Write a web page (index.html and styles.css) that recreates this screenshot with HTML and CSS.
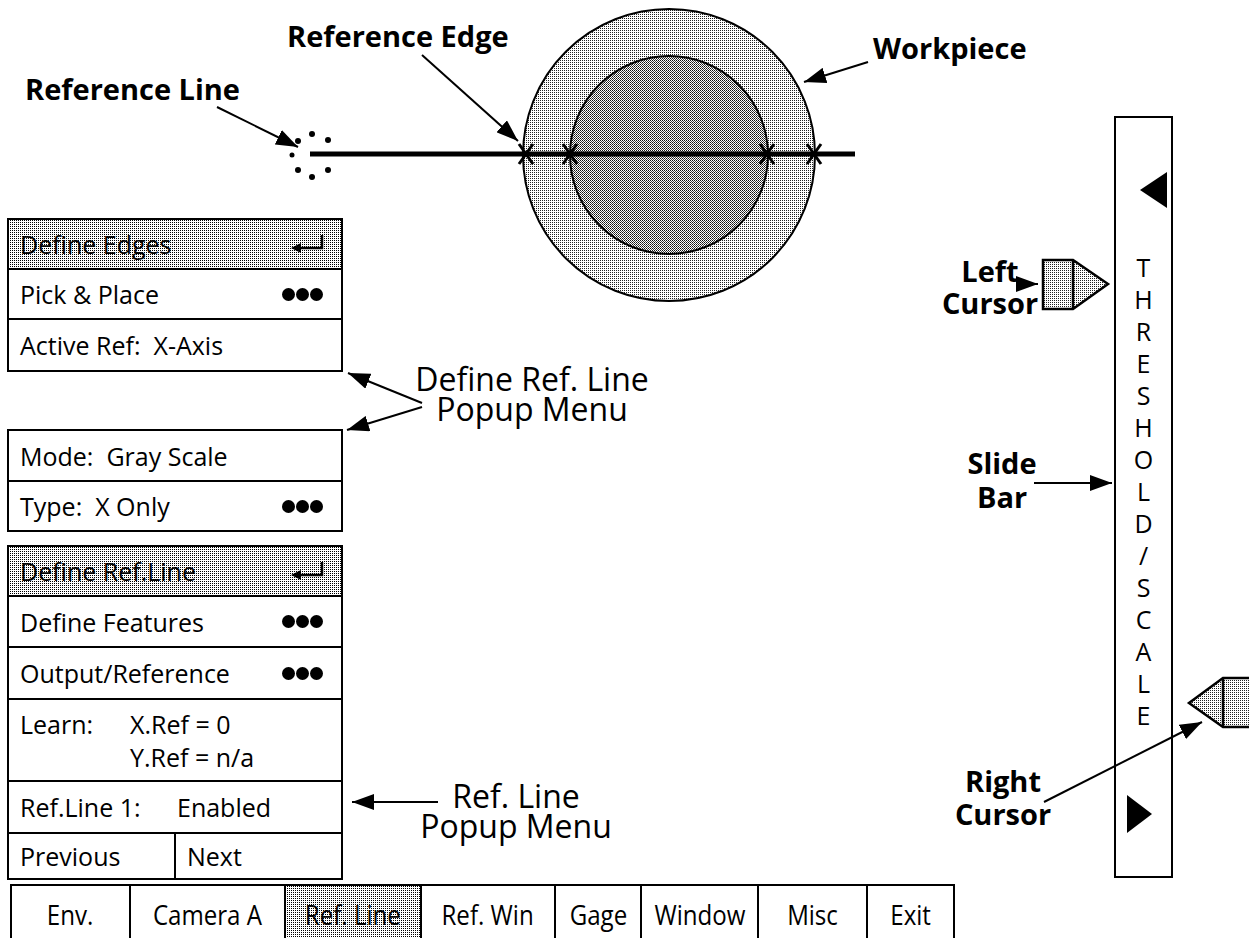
FILE: index.html
```html
<html>
<head>
    <link rel="stylesheet" href="styles.css">
</head>
<body>
<div class="page">

  <div class="side">
    <div class="menu edges">
      <div class="row head"><span>Define Edges</span><svg class="ret" viewBox="0 0 34 22"><path d="M31 2 V15 H7" /><polygon points="0,15 10,10 10,20" /></svg></div>
      <div class="row"><span>Pick &amp; Place</span><span class="more"><i></i><i></i><i></i></span></div>
      <div class="row">Active Ref:  X-Axis</div>
    </div>

    <div class="menu mode">
      <div class="row">Mode:  Gray Scale</div>
      <div class="row"><span>Type:  X Only</span><span class="more"><i></i><i></i><i></i></span></div>
    </div>

    <div class="menu refline">
      <div class="row head"><span>Define Ref.Line</span><svg class="ret" viewBox="0 0 34 22"><path d="M31 2 V15 H7" /><polygon points="0,15 10,10 10,20" /></svg></div>
      <div class="row"><span>Define Features</span><span class="more"><i></i><i></i><i></i></span></div>
      <div class="row"><span>Output/Reference</span><span class="more"><i></i><i></i><i></i></span></div>
      <div class="row learn"><span class="key">Learn:</span><span class="vals">X.Ref = 0<br>Y.Ref = n/a</span></div>
      <div class="row"><span class="key wide">Ref.Line 1:</span><span class="grow">Enabled</span></div>
      <div class="row split"><span class="cell">Previous</span><span class="cell">Next</span></div>
    </div>
  </div>

  <div class="tabs">
    <div class="tab"><span>Env.</span></div>
    <div class="tab"><span>Camera A</span></div>
    <div class="tab on"><span>Ref. Line</span></div>
    <div class="tab"><span>Ref. Win</span></div>
    <div class="tab"><span>Gage</span></div>
    <div class="tab"><span>Window</span></div>
    <div class="tab"><span>Misc</span></div>
    <div class="tab"><span>Exit</span></div>
  </div>

  <svg class="sketch" width="1249" height="938" viewBox="0 0 1249 938">
    <defs>
      <pattern id="light" width="2" height="2" patternUnits="userSpaceOnUse">
        <rect width="2" height="2" fill="#fff"/><rect width="1" height="1" fill="#222"/>
      </pattern>
      <pattern id="dark" width="2" height="2" patternUnits="userSpaceOnUse">
        <rect width="2" height="2" fill="#fff"/><rect width="1" height="1" fill="#111"/><rect x="1" y="1" width="1" height="1" fill="#444"/>
      </pattern>
      <marker id="head" markerWidth="22" markerHeight="16" refX="22" refY="8" orient="auto" markerUnits="userSpaceOnUse">
        <path d="M0 0 L22 8 L0 16 z"/>
      </marker>
    </defs>

    <!-- workpiece -->
    <circle cx="669" cy="155" r="146" fill="url(#light)" stroke="#000" stroke-width="2"/>
    <circle cx="669" cy="155" r="99" fill="url(#dark)" stroke="#000" stroke-width="2"/>
    <line x1="310" y1="154" x2="855" y2="154" stroke="#000" stroke-width="5"/>
    <g stroke="#000" stroke-width="3">
      <path d="M519 144 L533 164 M533 144 L519 164"/>
      <path d="M563 144 L577 164 M577 144 L563 164"/>
      <path d="M760 144 L774 164 M774 144 L760 164"/>
      <path d="M807 144 L821 164 M821 144 L807 164"/>
    </g>
    <g fill="#000">
      <circle cx="298" cy="141" r="3"/><circle cx="312" cy="134" r="3"/><circle cx="328" cy="140" r="3"/>
      <circle cx="292" cy="155" r="2.5"/><circle cx="298" cy="170" r="3"/><circle cx="312" cy="177" r="3"/>
      <circle cx="328" cy="170" r="3"/>
    </g>

    <!-- arrows -->
    <g stroke="#000" stroke-width="2" marker-end="url(#head)">
      <line x1="217" y1="107" x2="298" y2="147"/>
      <line x1="422" y1="55" x2="518" y2="141"/>
      <line x1="868" y1="62" x2="804" y2="82"/>
      <line x1="422" y1="403" x2="348" y2="373"/>
      <line x1="422" y1="407" x2="347" y2="430"/>
      <line x1="438" y1="802" x2="352" y2="802"/>
      <line x1="1019" y1="284" x2="1038" y2="284"/>
      <line x1="1034" y1="483" x2="1112" y2="483"/>
      <line x1="1044" y1="802" x2="1202" y2="722"/>
    </g>

    <!-- cursors -->
    <g stroke="#000" stroke-width="2.5" fill="url(#light)">
      <polygon points="1043,260 1073,260 1108,284 1073,309 1043,309"/>
      <line x1="1073" y1="260" x2="1073" y2="309"/>
      <polygon points="1260,678 1223,678 1189,703 1223,727 1260,727"/>
      <line x1="1223" y1="678" x2="1223" y2="727"/>
    </g>
  </svg>

  <div class="note ref-edge">Reference Edge</div>
  <div class="note ref-line">Reference Line</div>
  <div class="note workpiece">Workpiece</div>
  <div class="note left-cur">Left<br>Cursor</div>
  <div class="note slide">Slide<br>Bar</div>
  <div class="note right-cur">Right<br>Cursor</div>
  <div class="note plain define-pop">Define Ref. Line<br>Popup Menu</div>
  <div class="note plain line-pop">Ref. Line<br>Popup Menu</div>

  <div class="slider">
    <i class="tri-up"></i>
    <div class="word">
      <span>T</span><span>H</span><span>R</span><span>E</span><span>S</span><span>H</span><span>O</span><span>L</span><span>D</span><span>/</span><span>S</span><span>C</span><span>A</span><span>L</span><span>E</span>
    </div>
    <i class="tri-down"></i>
  </div>

</div>
</body>
</html>
```

FILE: styles.css
```css
body { margin: 0; background: #fff; color: #000; font-family: "Open Sans", "DejaVu Sans", sans-serif; }
.page { position: relative; width: 1249px; height: 938px; overflow: hidden; box-sizing: border-box; padding: 218px 0 0 7px; }

.side { width: 336px; display: flex; flex-direction: column; }
.menu { border: 2px solid #000; font-size: 25px; }
.menu.edges { margin-bottom: 57px; }
.menu.mode { margin-bottom: 13px; }
.row { display: flex; align-items: center; justify-content: space-between; box-sizing: border-box; height: 50px; padding: 0 18px 0 11px; border-top: 2px solid #000; white-space: pre; }
.row:first-child { border-top: 0; }
.row.head { background: #fff conic-gradient(#000 25%, #fff 0) 0 0 / 2px 2px; }
.edges .row:nth-child(1) { height: 48px; }
.edges .row:nth-child(3) { height: 52px; }
.mode .row:nth-child(1) { height: 49px; }
.refline .row:nth-child(1) { height: 48px; }
.refline .row:nth-child(2) { height: 51px; }
.refline .row:nth-child(3) { height: 52px; }
.refline .row.learn { height: 82px; align-items: flex-start; justify-content: flex-start; padding-top: 8px; line-height: 33px; }
.refline .row:nth-child(5) { height: 52px; justify-content: flex-start; }
.refline .row.split { height: 46px; padding: 0; justify-content: flex-start; align-items: stretch; }
.key { width: 110px; }
.key.wide { width: 157px; }
.split .cell { display: flex; align-items: center; padding-left: 11px; }
.split .cell:first-child { width: 154px; border-right: 2px solid #000; }

.ret { width: 34px; height: 22px; margin-right: -2px; }
.ret path { fill: none; stroke: #000; stroke-width: 2.5; }
.ret polygon { fill: #000; }
.more { display: flex; gap: 1px; }
.more i { width: 13px; height: 13px; border-radius: 50%; background: #000; }

.tabs { display: grid; grid-template-columns: 119px 155px 136px 134px 86px 117px 109px 89px; margin: 4px 0 0 3px; width: 945px; height: 62px; border-top: 2px solid #000; font-size: 28px; }
.tab { display: flex; align-items: center; justify-content: center; padding-bottom: 6px; border-left: 2px solid #000; }
.tab:last-child { border-right: 2px solid #000; }
.tab span { display: block; transform: scaleX(0.86); white-space: nowrap; }
.tab.on { background: #fff conic-gradient(#000 25%, #fff 0) 0 0 / 2px 2px; }

.sketch { position: absolute; left: 0; top: 0; pointer-events: none; }

.note { position: absolute; font-weight: 700; font-size: 29px; line-height: 32px; white-space: nowrap; }
.note.plain { font-weight: 400; font-size: 32px; line-height: 30px; text-align: center; }
.ref-edge { left: 287px; top: 20px; }
.ref-line { left: 25px; top: 73px; }
.workpiece { left: 873px; top: 32px; }
.left-cur { left: 940px; top: 255px; width: 100px; text-align: center; }
.slide { left: 952px; top: 446px; width: 100px; text-align: center; line-height: 34px; }
.right-cur { left: 953px; top: 764px; width: 100px; text-align: center; line-height: 33px; }
.define-pop { left: 392px; top: 364px; width: 280px; }
.line-pop { left: 376px; top: 781px; width: 280px; line-height: 33px; }

.slider { position: absolute; left: 1114px; top: 116px; width: 59px; height: 762px; box-sizing: border-box; border: 2px solid #000; display: flex; flex-direction: column; padding-top: 54px; }
.tri-up { align-self: flex-end; margin-right: 4px; width: 0; height: 0; border-right: 27px solid #000; border-top: 18px solid transparent; border-bottom: 18px solid transparent; }
.tri-down { align-self: flex-start; margin: 64px 0 0 11px; width: 0; height: 0; border-left: 25px solid #000; border-top: 19px solid transparent; border-bottom: 19px solid transparent; }
.word { margin-top: 43px; display: flex; flex-direction: column; align-items: center; font-size: 25px; line-height: 32px; }
```
